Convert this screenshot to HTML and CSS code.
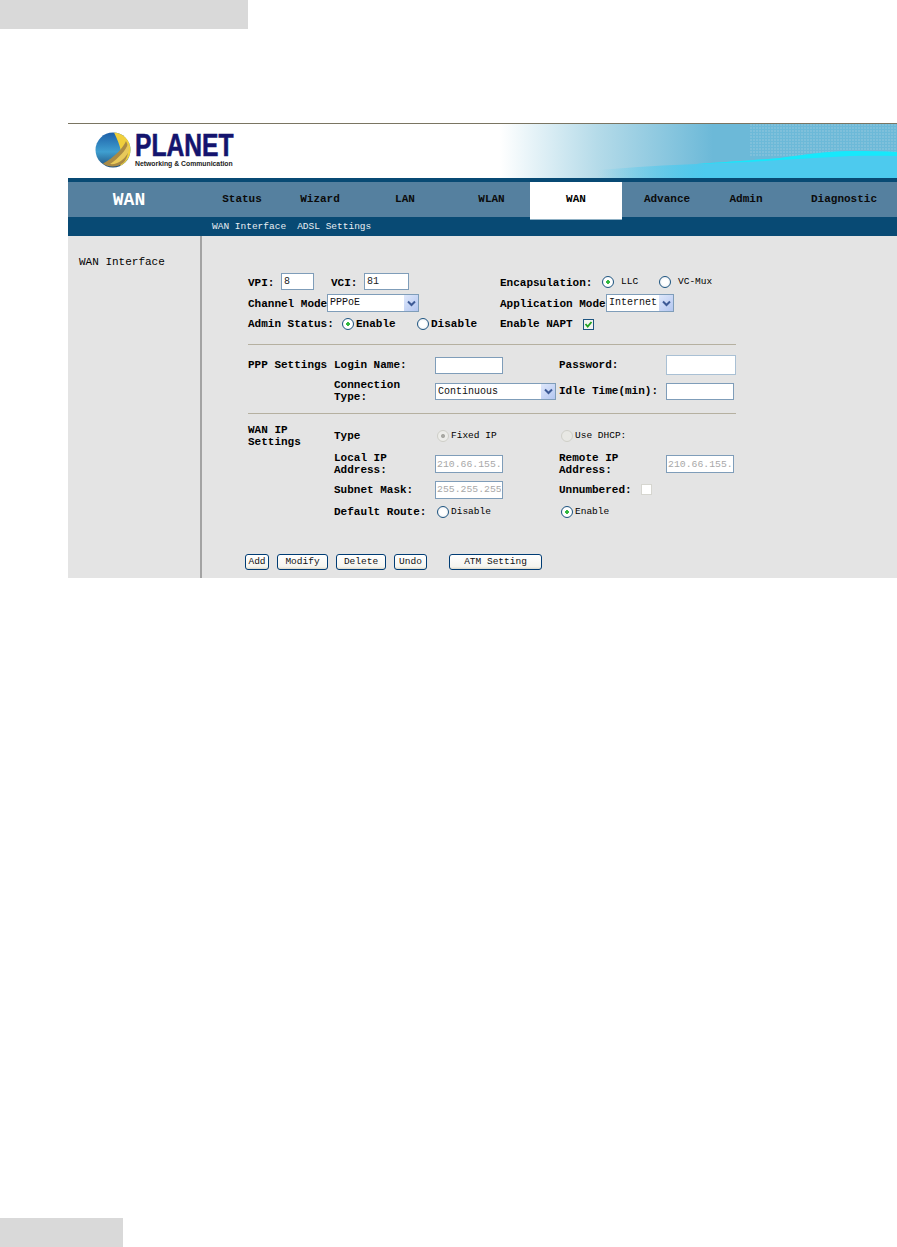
FILE: index.html
```html
<!DOCTYPE html>
<html lang="en">
<head>
<meta charset="utf-8">
<title>WAN</title>
<link rel="stylesheet" href="styles.css">
</head>
<body>
<div class="band band-top"></div>
<div class="frame">
  <header class="banner">
    <svg class="swoosh" viewBox="0 0 300 54" width="300" height="54" aria-hidden="true">
      <defs>
        <pattern id="dots" width="3" height="3" patternUnits="userSpaceOnUse">
          <rect width="2" height="2" fill="#8fc6dd"/>
        </pattern>
        <linearGradient id="fade" x1="0" y1="0" x2="1" y2="0">
          <stop offset="0" stop-color="#4dcaee" stop-opacity="0"/>
          <stop offset=".36" stop-color="#4dcaee" stop-opacity="1"/>
          <stop offset="1" stop-color="#4dcaee"/>
        </linearGradient>
      </defs>
      <rect x="153" y="0" width="147" height="33" fill="url(#dots)" opacity=".55"/>
      <path d="M0 46 C40 43 70 41 100 40 C130 38 160 36 183 34 C205 31 230 27 253 27 C270 27 285 27 300 28 L300 54 L0 54 Z" fill="url(#fade)"/>
      <path d="M100 40 C130 38 160 36 183 34 C205 31 230 27 253 27 C270 27 285 27 300 28 L300 32 C285 31.500 270 31.500 253 32 C230 33 205 35 183 36 C155 38 130 39 100 40 Z" fill="#17e8fb"/>
    </svg>
    <div class="logo">
      <svg class="globe" viewBox="0 0 36 36" width="36" height="36" aria-hidden="true">
        <defs>
          <linearGradient id="sea" x1="0" y1="0" x2="0" y2="1">
            <stop offset="0" stop-color="#1d5fa8"/>
            <stop offset=".55" stop-color="#3f9fd0"/>
            <stop offset="1" stop-color="#20507e"/>
          </linearGradient>
        </defs>
        <circle cx="18" cy="18" r="17.500" fill="url(#sea)"/>
        <path d="M19 .5 C28 1 35.500 8 35.500 18 C35.500 25 31 31 25 34 C27 28 27 24 26 20 C25 13 22 7 19 .5 Z" fill="#f0cf3c"/>
        <path d="M31 9 C28 16 20 25 8 31.500 C12 35 22 36 28 31 C33 27 35 16 31 9 Z" fill="#a98a45"/>
        <path d="M33 12 C31 18 24 26 15 32 C22 33 29 28 33 21 C35 17 34 14 33 12 Z" fill="#e8c95a"/>
      </svg>
      <div class="wordmark">
        <span class="planet">PLANET</span>
        <span class="tagline">Networking &amp; Communication</span>
      </div>
    </div>
  </header>
  <div class="rule-navy"></div>
  <nav class="nav">
    <div class="nav-title">WAN</div>
    <a class="nav-item">Status</a>
    <a class="nav-item">Wizard</a>
    <a class="nav-item">LAN</a>
    <a class="nav-item">WLAN</a>
    <a class="nav-item active">WAN</a>
    <a class="nav-item">Advance</a>
    <a class="nav-item">Admin</a>
    <a class="nav-item last">Diagnostic</a>
  </nav>
  <div class="subnav"><span>WAN Interface</span><span>ADSL Settings</span></div>
  <div class="content">
    <aside class="sidebar">WAN Interface</aside>
    <main class="main">
      <div class="top-grid">
        <div class="row r1">
          <label class="b vpi">VPI:</label><input class="in w33" value="8">
          <label class="b vci">VCI:</label><input class="in w45" value="81">
        </div>
        <div class="row r1">
          <label class="b encap">Encapsulation:</label>
          <span class="opt wide w57"><input type="radio" class="rd" name="enc" checked>LLC</span>
          <span class="opt wide"><input type="radio" class="rd" name="enc">VC-Mux</span>
        </div>
        <div class="row r2">
          <label class="b chan">Channel Mode</label>
          <div class="sel w92"><select><option>PPPoE</option></select><span class="arrow"><svg viewBox="0 0 9 7" width="9" height="7"><path d="M1 1.500 L4.500 5 L8 1.500" fill="none" stroke="#3d5a96" stroke-width="2"/></svg></span></div>
        </div>
        <div class="row r2">
          <label class="b appm">Application Mode</label>
          <div class="sel w68"><select><option>Internet</option></select><span class="arrow"><svg viewBox="0 0 9 7" width="9" height="7"><path d="M1 1.500 L4.500 5 L8 1.500" fill="none" stroke="#3d5a96" stroke-width="2"/></svg></span></div>
        </div>
        <div class="row">
          <label class="b adm">Admin Status:</label>
          <span class="opt b w75"><input type="radio" class="rd" name="adm" checked>Enable</span>
          <span class="opt b"><input type="radio" class="rd" name="adm">Disable</span>
        </div>
        <div class="row">
          <label class="b napt">Enable NAPT</label>
          <span class="check"><svg viewBox="0 0 9 9" width="9" height="9"><path d="M1.500 4 L3.700 6.500 L7.500 2" fill="none" stroke="#21a121" stroke-width="1.800"/></svg></span>
        </div>
      </div>
      <hr class="rule hr1">
      <div class="fgrid ppp">
        <div class="b">PPP Settings</div>
        <div class="b">Login Name:</div>
        <div><input class="in w68"></div>
        <div class="b">Password:</div>
        <div><input class="in w70 pale"></div>
        <div></div>
        <div class="b">Connection<br>Type:</div>
        <div class="sel w121"><select><option>Continuous</option></select><span class="arrow"><svg viewBox="0 0 9 7" width="9" height="7"><path d="M1 1.500 L4.500 5 L8 1.500" fill="none" stroke="#3d5a96" stroke-width="2"/></svg></span></div>
        <div class="b">Idle Time(min):</div>
        <div><input class="in w68"></div>
      </div>
      <hr class="rule hr2">
      <div class="fgrid wan">
        <div class="b">WAN IP<br>Settings</div>
        <div class="b">Type</div>
        <div class="opt pad"><input type="radio" class="rd" name="ty" checked disabled>Fixed IP</div>
        <div class="opt pad"><input type="radio" class="rd" name="ty" disabled>Use DHCP:</div>
        <div></div>
        <div></div>
        <div class="b">Local IP<br>Address:</div>
        <div><input class="in w68 dis" value="210.66.155." disabled></div>
        <div class="b">Remote IP<br>Address:</div>
        <div><input class="in w68 dis" value="210.66.155." disabled></div>
        <div></div>
        <div class="b">Subnet Mask:</div>
        <div><input class="in w68 dis" value="255.255.255" disabled></div>
        <div class="row"><span class="b unn">Unnumbered:</span><span class="check off"></span></div>
        <div></div>
        <div></div>
        <div class="b">Default Route:</div>
        <div class="opt pad"><input type="radio" class="rd" name="df">Disable</div>
        <div class="opt pad"><input type="radio" class="rd" name="df" checked>Enable</div>
        <div></div>
      </div>
      <div class="actions">
        <button class="btn w24">Add</button>
        <button class="btn w51">Modify</button>
        <button class="btn w50">Delete</button>
        <button class="btn w33b">Undo</button>
        <button class="btn w93">ATM Setting</button>
      </div>
    </main>
  </div>
</div>
<div class="band band-bottom"></div>
</body>
</html>
```

FILE: styles.css
```css
* { box-sizing: border-box; }
html, body { height: 100%; }
body {
  margin: 0;
  height: 1247px;
  overflow: hidden;
  display: flex;
  flex-direction: column;
  background: #fff;
  color: #000;
  font: 11px/12px "Liberation Mono", monospace;
}
.band { background: #d9d9d9; height: 29px; flex: none; }
.band-top { width: 248px; }
.band-bottom { width: 123px; margin-top: auto; }

.frame { margin: 94px 0 0 68px; width: 829px; flex: none; }

.banner {
  position: relative;
  height: 55px;
  border-top: 1px solid #7a7562;
  display: flex;
  background: linear-gradient(90deg, #fff 0, #fff 432px, #b5dbe9 529px, #6cb9d8 645px, #6cb9d8 100%);
}
.swoosh { position: absolute; right: 0; top: 0; }
.logo { display: flex; gap: 4px; padding: 8px 0 0 27px; align-items: flex-start; }
.wordmark { display: flex; flex-direction: column; }
.planet {
  display: block;
  font: 700 32px/26px "Liberation Sans", sans-serif;
  color: #14146e;
  -webkit-text-stroke: .6px #14146e;
  transform: scaleX(.77);
  transform-origin: left center;
  width: 98px;
  white-space: nowrap;
}
.tagline {
  margin-top: 1px;
  font: 700 6.850px/9px "Liberation Sans", sans-serif;
  color: #222;
  white-space: nowrap;
}
.rule-navy { height: 4px; background: #084a74; }

.nav {
  display: grid;
  grid-template-columns: 133px 82px 74px 96px 77px 92px 90px 68px 117px;
  height: 35px;
  background: #55809f;
  align-items: stretch;
}
.nav-title {
  color: #fff;
  font: 700 18px/37px "Liberation Mono", monospace;
  text-align: center;
  padding-right: 11px;
}
.nav-item { text-align: center; line-height: 35px; font-weight: 700; color: #0b0b0b; }
.nav-item.active { background: #fff; color: #000; box-shadow: 0 1px 0 #8fb0c4; }
.nav-item.last { padding-left: 11px; }

.subnav {
  height: 19px;
  background: #084a74;
  color: #e8eef3;
  font-size: 9.500px;
  line-height: 19px;
  padding-left: 144px;
  display: flex;
  gap: 11px;
}

.content { display: flex; background: #e4e4e4; }
.sidebar {
  width: 134px;
  flex: none;
  border-right: 2px solid #a3a3a3;
  padding: 20px 0 0 11px;
}
.main { flex: 1; padding: 37px 0 8px 46px; }

.b { font-weight: 700; }
.row { display: flex; align-items: center; }
.top-grid {
  display: grid;
  grid-template-columns: 252px 1fr;
  grid-template-rows: 17px 18px 16px;
  row-gap: 4px;
}
.r1 label, .r2 label { padding-top: 2px; }
.r1 .opt { padding-top: 1px; }
.vpi { width: 33px; }
.vci { width: 33px; margin-left: 17px; }
.chan { width: 79px; white-space: nowrap; }
.appm { width: 106px; white-space: nowrap; }
.encap { width: 102px; white-space: nowrap; }
.adm { width: 94px; white-space: nowrap; }
.napt { width: 83px; white-space: nowrap; }
.unn { width: 82px; }

.in {
  height: 17px;
  border: 1px solid #7f9db9;
  background: #fff;
  padding: 0 2px;
  margin: 0;
  font: 10px/15px "Liberation Mono", monospace;
  color: #222;
  border-radius: 0;
  outline: 0;
  display: block;
}
.w33 { width: 33px; }
.w45 { width: 45px; }
.w68 { width: 68px; }
.w70 { width: 70px; }
.pale { height: 20px; border-color: #a9c0d4; }
.dis {
  height: 18px;
  padding: 0 1px;
  font-size: 9.800px;
  color: #a8a8a8;
  -webkit-text-fill-color: #a8a8a8;
  background: #fff;
  opacity: 1;
}

.sel { position: relative; height: 18px; }
.sel select {
  appearance: none;
  -webkit-appearance: none;
  display: block;
  width: 100%;
  height: 100%;
  border: 1px solid #7f9db9;
  border-radius: 0;
  background: #fff;
  padding: 0 2px;
  font: 10px/16px "Liberation Mono", monospace;
  color: #111;
  outline: 0;
}
.arrow {
  position: absolute;
  top: 1px;
  right: 1px;
  bottom: 1px;
  width: 14px;
  background: linear-gradient(135deg, #dfe8fb, #b3c6f0);
  display: flex;
  align-items: center;
  justify-content: center;
}
.w92 { width: 92px; }
.w121 { width: 121px; height: 17px; }
.w68.sel { width: 68px; }

.opt { display: flex; align-items: center; gap: 2px; font-size: 9.500px; white-space: nowrap; }
.opt.b { font-size: 11px; }
.opt.wide { gap: 7px; }
.w57 { width: 57px; }
.w75 { width: 75px; }
.pad { padding-left: 2px; }
.rd {
  appearance: none;
  -webkit-appearance: none;
  width: 12px;
  height: 12px;
  margin: 0;
  flex: none;
  border: 1px solid #1d5480;
  border-radius: 50%;
  background: radial-gradient(circle, #fff 0, #fff 40%, #dfe4ea 100%);
}
.rd:checked { background: radial-gradient(circle, #2fb73c 0, #2fb73c 22%, #fff 30%, #fff 60%, #dfe4ea 100%); }
.rd:disabled { border-color: #cfcfc8; background: #e8e8e4; }
.rd:disabled:checked { background: radial-gradient(circle, #a9a9a4 0, #a9a9a4 22%, #ededea 34%); }

.check {
  width: 11px;
  height: 11px;
  flex: none;
  border: 1px solid #1d5480;
  background: #f4f4f0;
  display: flex;
  align-items: center;
  justify-content: center;
}
.check.off { border-color: #d6d6d0; background: #fff; }

.rule { border: 0; height: 1px; background: #b5b0a0; margin: 0; width: 488px; }
.hr1 { margin-top: 12px; }
.hr2 { margin-top: 10px; }

.fgrid {
  display: grid;
  grid-template-columns: 86px 101px 124px 107px 70px;
  align-items: center;
  row-gap: 4px;
}
.ppp { grid-template-rows: 20px 24px; margin-top: 10px; }
.wan { grid-template-rows: 24px 24px 19px 17px; margin-top: 10px; }

.actions { display: flex; gap: 8px; margin: 34px 0 0 -3px; }
.btn {
  height: 16px;
  padding: 0;
  border: 1px solid #003c74;
  border-radius: 3px;
  background: linear-gradient(180deg, #fff, #f5f4ee 85%, #dcd8c8);
  font: 9.500px/14px "Liberation Mono", monospace;
  color: #111;
}
.w24 { width: 24px; }
.w51 { width: 51px; }
.w50 { width: 50px; }
.w33b { width: 33px; }
.w93 { width: 93px; margin-left: 14px; }
```
